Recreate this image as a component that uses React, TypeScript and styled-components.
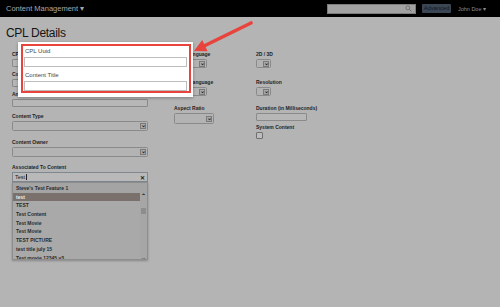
import React from "react";
import styled, { createGlobalStyle } from "styled-components";

const GlobalStyle = createGlobalStyle`
  html, body {
    margin: 0;
    padding: 0;
    background: #b4b4b4;
    font-family: "Liberation Sans", Arial, sans-serif;
  }
`;

const suggestions = [
  "test",
  "TEST",
  "Test Content",
  "Test Movie",
  "Test Movie",
  "TEST PICTURE",
  "test title july 15",
  "Test movie 12345 v3",
];

const App: React.FC = () => {
  return (
    <>
      <GlobalStyle />
      <Screen>
        <TopBar>
          <Brand>Content Management ▾</Brand>
          <TopRight>
            <SearchBox>
              <svg width="7" height="7" viewBox="0 0 16 16">
                <circle cx="6.5" cy="6.5" r="4.5" fill="none" stroke="#6a6a6a" strokeWidth="2" />
                <line x1="10" y1="10" x2="14.5" y2="14.5" stroke="#6a6a6a" strokeWidth="2.2" />
              </svg>
            </SearchBox>
            <AdvancedButton>Advanced</AdvancedButton>
            <User>John Doe ▾</User>
          </TopRight>
        </TopBar>

        <Page>
          <Title>CPL Details</Title>
          <FormGrid>
            <Column>
              <Field gap={4}>
                <Label>CPL Uuid</Label>
                <TextInput />
              </Field>
              <Field gap={4}>
                <Label>Content Title</Label>
                <TextInput />
              </Field>
              <Field gap={6}>
                <Label>Annotation Text</Label>
                <TextInput />
              </Field>
              <Field gap={8}>
                <Label>Content Type</Label>
                <Select width={136} height={10}>
                  <SelectArrow>⌄</SelectArrow>
                </Select>
              </Field>
              <Field gap={7}>
                <Label>Content Owner</Label>
                <Select width={136} height={10}>
                  <SelectArrow>⌄</SelectArrow>
                </Select>
              </Field>
              <Field gap={0}>
                <Label>Associated To Content</Label>
                <Combo>
                  <ComboText>
                    Test<Caret />
                  </ComboText>
                  <Clear>✕</Clear>
                  <DropList>
                    <GroupRow>Steve's Test Feature 1</GroupRow>
                    <ListBody>
                      <Options>
                        {suggestions.map((s, i) => (
                          <Option key={i} active={i === 0}>
                            {s}
                          </Option>
                        ))}
                      </Options>
                      <ScrollTrack>
                        <ScrollArrow>⌃</ScrollArrow>
                        <ScrollThumb />
                        <ScrollArrow>⌄</ScrollArrow>
                      </ScrollTrack>
                    </ListBody>
                  </DropList>
                </Combo>
              </Field>
            </Column>

            <Column>
              <Field gap={11}>
                <Label>Main Language</Label>
                <Select width={33} height={9}>
                  <SelectArrow>⌄</SelectArrow>
                </Select>
              </Field>
              <Field gap={9}>
                <Label>Audio Language</Label>
                <Select width={33} height={9}>
                  <SelectArrow>⌄</SelectArrow>
                </Select>
              </Field>
              <Field gap={0}>
                <Label>Aspect Ratio</Label>
                <Select width={40} height={11}>
                  <SelectArrow>⌄</SelectArrow>
                </Select>
              </Field>
            </Column>

            <Column>
              <Field gap={11}>
                <Label>2D / 3D</Label>
                <Select width={15} height={9}>
                  <SelectArrow>⌄</SelectArrow>
                </Select>
              </Field>
              <Field gap={9}>
                <Label>Resolution</Label>
                <Select width={15} height={9}>
                  <SelectArrow>⌄</SelectArrow>
                </Select>
              </Field>
              <Field gap={3}>
                <Label>Duration (in Milliseconds)</Label>
                <TextInput style={{ width: 51 }} />
              </Field>
              <Field gap={0}>
                <Label>System Content</Label>
                <Checkbox />
              </Field>
            </Column>
          </FormGrid>
        </Page>

        <Callout>
          <CalloutInner>
            <CalloutLabel>CPL Uuid</CalloutLabel>
            <CalloutInput />
            <CalloutLabel>Content Title</CalloutLabel>
            <CalloutInput />
          </CalloutInner>
        </Callout>

        <ArrowLayer width="500" height="307" viewBox="0 0 500 307">
          <line x1="251" y1="23" x2="204" y2="46" stroke="#e8433c" strokeWidth="3.6" strokeLinecap="round" />
          <polygon points="194,51 207.6,51.3 202.2,40" fill="#e8433c" />
        </ArrowLayer>
      </Screen>
    </>
  );
};

export default App;

interface SizeProps {
  width?: number;
  height?: number;
}

const Screen = styled.div`
  position: relative;
  width: 500px;
  height: 307px;
  overflow: hidden;
  background: #b4b4b4;
`;

const TopBar = styled.div`
  height: 17px;
  background: #000;
  display: flex;
  align-items: center;
  justify-content: space-between;
  padding: 0 6px;
`;

const Brand = styled.div`
  color: #a8a8a8;
  font-size: 7.5px;
  -webkit-font-smoothing: antialiased;
`;

const TopRight = styled.div`
  display: flex;
  align-items: center;
  margin-right: 8px;
`;

const SearchBox = styled.div`
  width: 84px;
  height: 8px;
  background: #a2a2a2;
  border: 1px solid #7c7c7c;
  display: flex;
  align-items: center;
  justify-content: flex-end;
  padding-right: 3px;
  box-sizing: content-box;
`;

const AdvancedButton = styled.div`
  background: #3b4655;
  color: #0e1620;
  font-size: 5.8px;
  padding: 1px 1.5px;
  height: 7px;
  line-height: 7px;
  border-radius: 1px;
  margin-left: 6px;
`;

const User = styled.div`
  color: #8e8e8e;
  font-size: 5.5px;
  margin-left: 7px;
`;

const Page = styled.div`
  padding: 6px 6px 0;
`;

const Title = styled.h1`
  margin: 0;
  font-size: 12px;
  line-height: 20px;
  font-weight: normal;
  color: #141414;
  letter-spacing: -0.3px;
`;

const FormGrid = styled.div`
  display: grid;
  grid-template-columns: 136px 56px 1fr;
  column-gap: 26px;
  margin: 8px 0 0 6px;
`;

const Column = styled.div`
  display: flex;
  flex-direction: column;
`;

const Field = styled.div<{ gap: number }>`
  display: flex;
  flex-direction: column;
  align-items: flex-start;
  margin-bottom: ${(p) => p.gap}px;
`;

const Label = styled.div`
  font-size: 5px;
  line-height: 6px;
  height: 6px;
  font-weight: bold;
  color: #1e1e1e;
  white-space: nowrap;
  margin-bottom: 2px;
`;

const TextInput = styled.div`
  width: 136px;
  height: 8px;
  box-sizing: border-box;
  border: 1px solid #8a8a8a;
  border-radius: 1px;
  background: #b7b7b7;
`;

const Select = styled.div<SizeProps>`
  width: ${(p) => p.width}px;
  height: ${(p) => p.height}px;
  box-sizing: border-box;
  border: 1px solid #8a8a8a;
  border-radius: 1.5px;
  background: #b3b3b3;
  display: flex;
  justify-content: flex-end;
  align-items: center;
  padding-right: 1px;
`;

const SelectArrow = styled.div`
  width: 6px;
  height: 6px;
  box-sizing: border-box;
  border: 1px solid #7a7a7a;
  background: #a9a9a9;
  color: #222;
  font-size: 6px;
  line-height: 2px;
  font-weight: bold;
  text-align: center;
`;

const Combo = styled.div`
  position: relative;
  width: 136px;
  height: 10px;
  box-sizing: border-box;
  border: 1px solid #7f8790;
  background: #b9b9b9;
  display: flex;
  align-items: center;
  justify-content: space-between;
  padding: 0 2px;
`;

const ComboText = styled.div`
  font-size: 5.5px;
  color: #1a1a1a;
  display: flex;
  align-items: center;
`;

const Caret = styled.span`
  display: inline-block;
  width: 0.5px;
  height: 6px;
  background: #222;
  margin-left: 0.5px;
`;

const Clear = styled.div`
  font-size: 6px;
  font-weight: bold;
  color: #1a1a1a;
`;

const DropList = styled.div`
  position: absolute;
  top: 9px;
  left: -1px;
  width: 136px;
  height: 78px;
  overflow: hidden;
  box-sizing: border-box;
  border: 1px solid #8d8d8d;
  background: #a9a9a9;
  box-shadow: 0 1px 2px rgba(0, 0, 0, 0.25);
`;

const GroupRow = styled.div`
  height: 8.7px;
  line-height: 8.7px;
  padding: 1px 0 0 3px;
  font-size: 5px;
  font-weight: bold;
  color: #2a2a2a;
  background: #a4a4a4;
`;

const ListBody = styled.div`
  display: flex;
`;

const Options = styled.div`
  flex: 1;
`;

const Option = styled.div<{ active?: boolean }>`
  height: 8.7px;
  line-height: 8.7px;
  padding-left: 3px;
  font-size: 5px;
  font-weight: bold;
  color: ${(p) => (p.active ? "#ececec" : "#2a2a2a")};
  background: ${(p) => (p.active ? "#7a716d" : "transparent")};
  white-space: nowrap;
`;

const ScrollTrack = styled.div`
  width: 7px;
  height: 68px;
  display: flex;
  flex-direction: column;
  align-items: center;
  justify-content: space-between;
  background: #a6a6a6;
`;

const ScrollArrow = styled.div`
  font-size: 6px;
  line-height: 6px;
  font-weight: bold;
  color: #1c1c1c;
`;

const ScrollThumb = styled.div`
  width: 5px;
  height: 6px;
  background: #8d8d8d;
  margin-bottom: 32px;
`;

const Checkbox = styled.div`
  width: 5px;
  height: 5px;
  border: 1px solid #6f6f6f;
  border-radius: 1px;
  background: #bdbdbd;
`;

const Callout = styled.div`
  position: absolute;
  left: 18px;
  top: 42px;
  width: 175px;
  height: 55px;
  box-sizing: border-box;
  background: #fff;
  padding: 2px 2px 4px 3px;
  box-shadow: 0 1px 3px rgba(0, 0, 0, 0.3);
`;

const CalloutInner = styled.div`
  height: 100%;
  box-sizing: border-box;
  border: 2px solid #e8433c;
  padding: 2px 2px 0 1px;
  display: flex;
  flex-direction: column;
`;

const CalloutLabel = styled.div`
  font-size: 6px;
  line-height: 7px;
  color: #444;
  margin: 0 0 2px 1px;
  flex-shrink: 0;
`;

const CalloutInput = styled.div`
  height: 10px;
  flex-shrink: 0;
  box-sizing: border-box;
  border: 1px solid #bdbdbd;
  background: #fff;
  margin-bottom: 5px;
`;

const ArrowLayer = styled.svg`
  position: absolute;
  left: 0;
  top: 0;
  pointer-events: none;
`;
